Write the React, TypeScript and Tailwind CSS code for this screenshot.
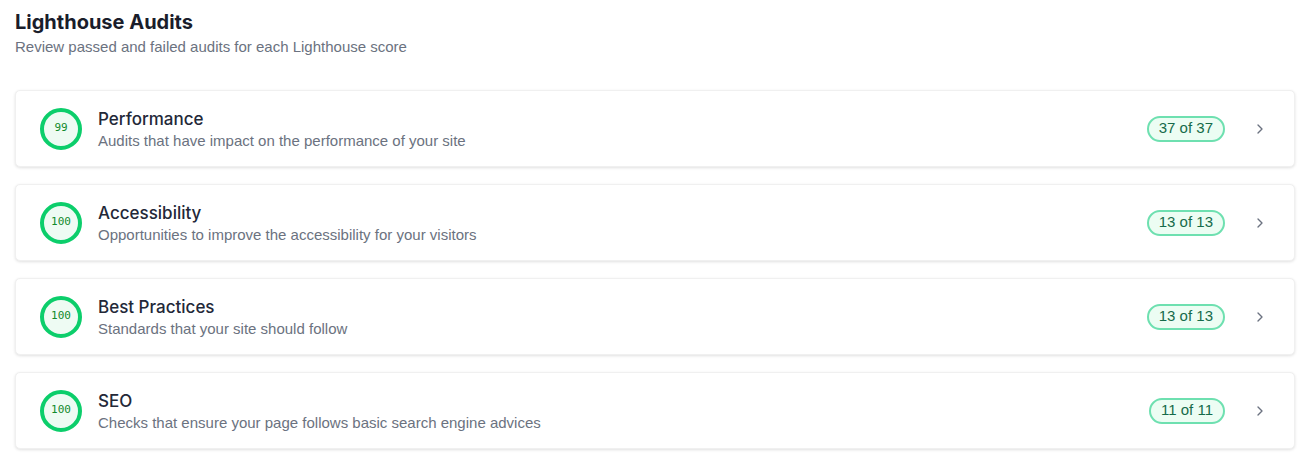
import React from 'react';
import { ChevronRight } from 'lucide-react';

const audits = [
  { score: 99, title: 'Performance', desc: 'Audits that have impact on the performance of your site', passed: 37, total: 37 },
  { score: 100, title: 'Accessibility', desc: 'Opportunities to improve the accessibility for your visitors', passed: 13, total: 13 },
  { score: 100, title: 'Best Practices', desc: 'Standards that your site should follow', passed: 13, total: 13 },
  { score: 100, title: 'SEO', desc: 'Checks that ensure your page follows basic search engine advices', passed: 11, total: 11 },
];

function ScoreRing({ score }: { score: number }) {
  return (
    <div className="w-[42px] h-[42px] rounded-full border-[4px] border-[#0cce6b] bg-[#eefbf3] flex items-center justify-center shrink-0">
      <span className="text-[11px] text-[#118a2c] font-['DejaVu_Sans_Mono',monospace]">{score}</span>
    </div>
  );
}

export default function App() {
  return (
    <div className="min-h-screen bg-white pl-[15px] pr-[13px] pt-[10px] font-['Liberation_Sans',Arial,sans-serif]">
      <h1 className="text-[20px] font-bold text-[#1a1d2b] leading-[24px] font-['Inter',sans-serif]">Lighthouse Audits</h1>
      <p className="text-[15px] text-[#6b7280] mt-[3px] leading-[20px] font-['Liberation_Sans',Arial,sans-serif]">
        Review passed and failed audits for each Lighthouse score
      </p>

      <div className="mt-[33px] flex flex-col gap-[17px]">
        {audits.map((a) => (
          <div
            key={a.title}
            className="h-[77px] rounded-[5px] bg-white border border-[#f0f0f0] shadow-[0_1px_3px_rgba(0,0,0,0.12)] flex items-center pl-[24px] pr-[26px] cursor-pointer"
          >
            <ScoreRing score={a.score} />
            <div className="ml-[16px] flex-1">
              <div className="text-[17px] font-medium text-[#232838] leading-[22px] font-['Inter',sans-serif]">{a.title}</div>
              <div className="text-[15px] text-[#6b7280] leading-[18px] mt-[2px] font-['Liberation_Sans',Arial,sans-serif]">{a.desc}</div>
            </div>
            <span className="h-[26px] px-[10px] rounded-full border-2 border-[#6ee0b0] bg-[#ecfdf3] text-[#166b4a] text-[15px] flex items-center font-['Liberation_Sans',Arial,sans-serif]">
              {a.passed} of {a.total}
            </span>
            <ChevronRight className="ml-[27px] w-[16px] h-[16px] text-[#6b7280]" strokeWidth={2} />
          </div>
        ))}
      </div>
    </div>
  );
}
